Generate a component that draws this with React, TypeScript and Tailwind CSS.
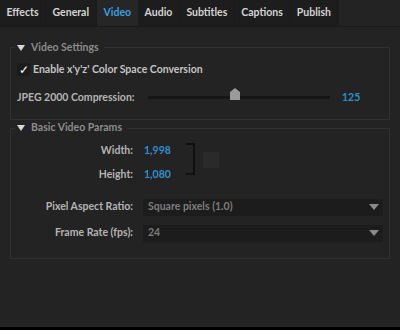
import React from "react";

const tabs = ["Effects", "General", "Video", "Audio", "Subtitles", "Captions", "Publish"];

function Triangle() {
  return (
    <svg viewBox="0 0 8 6" className="h-[6px] w-[8px] shrink-0" fill="#d8d8d8">
      <path d="M0 0h8L4 6z" />
    </svg>
  );
}

function SelectArrow() {
  return (
    <svg viewBox="0 0 10 6" className="h-[6px] w-[10px]" fill="#8a8a8a">
      <path d="M0 0h10L5 6z" />
    </svg>
  );
}

function Panel({ title, children, className }: { title: string; children: React.ReactNode; className?: string }) {
  return (
    <fieldset className={"mx-[10px] border border-[#303030] " + (className ?? "")}>
      <legend className="ml-[4px] flex items-center gap-[6px] px-[2px] text-[10.5px] font-bold text-[#8c8c8c]">
        <Triangle />
        <span className="pr-[3px]">{title}</span>
      </legend>
      {children}
    </fieldset>
  );
}

function Select({ value }: { value: string }) {
  return (
    <div className="flex h-[17px] w-[240px] items-center justify-between bg-[#1c1c1c] pl-[5px] pr-[4px]">
      <span className="text-[10.5px] font-bold text-[#7c7c7c]">{value}</span>
      <SelectArrow />
    </div>
  );
}

export default function App() {
  return (
    <div className="h-[330px] w-[400px] bg-black" style={{ fontFamily: '"Lato", "Liberation Sans", sans-serif' }}>
      <div className="h-[327px] bg-[#232323]">
        <div className="flex h-[27px] border-b border-[#1a1a1a]">
          {tabs.map((t) => (
            <div
              key={t}
              className={
                t === "Video"
                  ? "flex items-center bg-[#262626] px-[7px] text-[10.5px] font-bold text-[#3a9fe0]"
                  : "flex items-center border-r border-[#1a1a1a] bg-[#1d1d1d] px-[6.5px] text-[10.5px] font-bold text-[#d4d4d4]"
              }
            >
              {t}
            </div>
          ))}
        </div>

        <Panel title="Video Settings" className="mt-[13px] pb-[14px]">
          <div className="flex items-center gap-[3px] pl-[6px] pt-[6px]">
            <div className="flex h-[13px] w-[13px] items-center justify-center bg-[#1c1c1c] text-[12px] leading-none text-white">✓</div>
            <span className="text-[10.5px] font-bold text-[#c4c4c4]">Enable x'y'z' Color Space Conversion</span>
          </div>
          <div className="mt-[12px] flex items-center pl-[6px]">
            <span className="w-[131px] text-[10.5px] font-bold text-[#b4b4b4]">JPEG 2000 Compression:</span>
            <div className="relative h-[3px] w-[182px] bg-[#161616]">
              <svg viewBox="0 0 10 12" className="absolute left-[82px] top-[-8px] h-[12px] w-[10px]" fill="#9a9a9a">
                <path d="M5 0L10 4V12H0V4z" />
              </svg>
            </div>
            <span className="ml-[12px] text-[10.5px] font-bold text-[#2f8fd0]">125</span>
          </div>
        </Panel>

        <Panel title="Basic Video Params" className="mt-0 pb-[16px]">
          <div className="flex items-start pt-[7px]">
            <div className="flex flex-col gap-[8px]">
              {[
                ["Width:", "1,998"],
                ["Height:", "1,080"],
              ].map(([l, v]) => (
                <div key={l} className="flex items-center">
                  <span className="w-[122px] text-right text-[10.5px] font-bold text-[#b4b4b4]">{l}</span>
                  <span className="ml-[11px] w-[42px] text-[10.5px] font-bold text-[#2f8fd0]">{v}</span>
                </div>
              ))}
            </div>
            <div className="h-[32px] w-[9px] shrink-0 border-y-2 border-r-2 border-[#101010]" />
            <div className="ml-[8px] mt-[9px] h-[16px] w-[16px] shrink-0 bg-[#2a2a2a]" />
          </div>
          <div className="mt-[16px] flex flex-col gap-[9px]">
            {[
              ["Pixel Aspect Ratio:", "Square pixels (1.0)"],
              ["Frame Rate (fps):", "24"],
            ].map(([l, v]) => (
              <div key={l} className="flex items-center">
                <span className="w-[132px] pr-[10px] text-right text-[10.5px] font-bold text-[#b4b4b4]">{l}</span>
                <Select value={v} />
              </div>
            ))}
          </div>
        </Panel>
      </div>
    </div>
  );
}
